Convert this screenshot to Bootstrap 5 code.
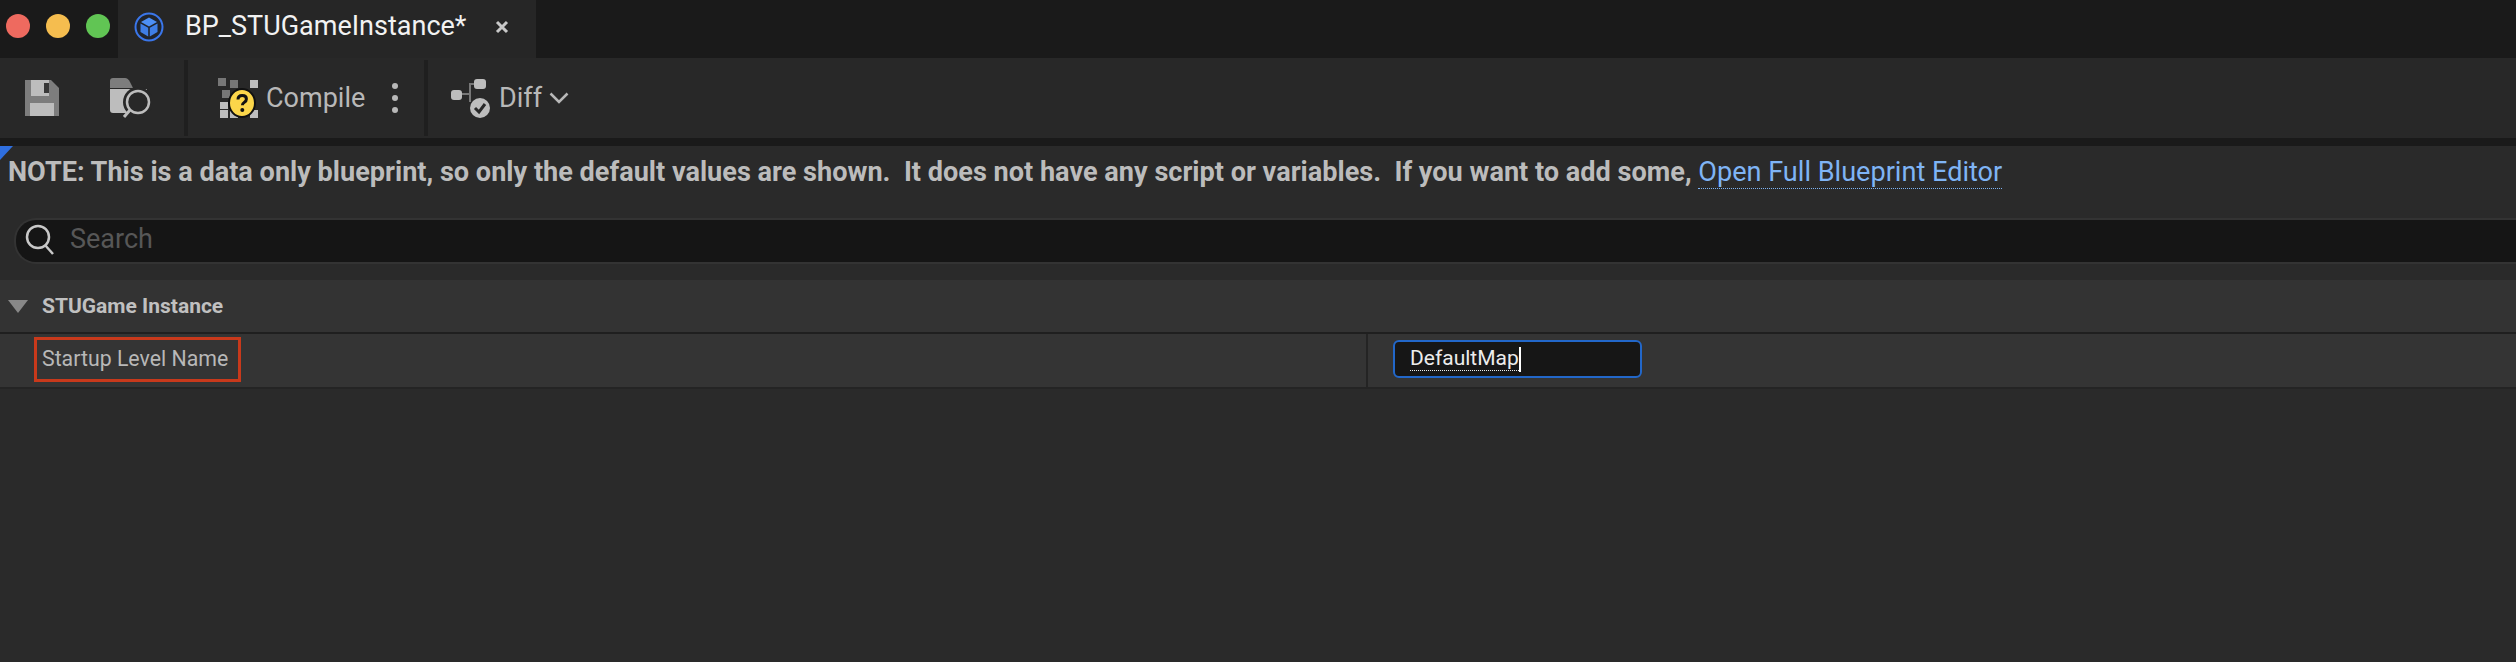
<!DOCTYPE html>
<html lang="en"><head><meta charset="utf-8"><title>BP_STUGameInstance</title>
<link href="https://cdn.jsdelivr.net/npm/bootstrap@5.3.0/dist/css/bootstrap.min.css" rel="stylesheet">
<style>
html,body{height:100%;margin:0;overflow:hidden;background:#2a2a2a;font-family:Roboto,"Liberation Sans",sans-serif;color:#c0c0c0}
.shell{height:662px;width:2516px}
.tabstrip{height:58px;background:#1a1a1a}
.lights{gap:16px;padding:0 0 6px 6px;width:118px;height:58px}
.light{width:24px;height:24px;border-radius:50%}
.tabitem{width:418px;height:58px;background:#262626;padding:0 0 5px 16px}
.tabtitle{font-size:27px;color:#f2f2f2;margin-left:21px;width:285px;white-space:nowrap;line-height:1}
.tabclose{margin-left:25px}
.toolbar{height:80px;background:#282828}
.sep{width:4px;height:76px;background:#1f1f1f;margin-top:2px}
.toollabel{font-size:27px;color:#b8b8b8;line-height:1;white-space:nowrap}
.gap-band{height:8px;background:#1a1a1a}
.panelbody{position:relative;background:#2a2a2a;flex:1}
.corner{position:absolute;left:0;top:0}
.notice{height:72px;padding:9px 0 0 8px;font-size:27.1px;font-weight:700;color:#bcbcbc;white-space:pre;line-height:34px}
.notice a{color:#7fb4f5;font-weight:400;text-decoration:none;border-bottom:1px dotted #7fb4f5}
.searchwrap{padding-left:14px;height:46px}
.searchbox{height:46px;background:#151515;border:2px solid #333;border-right:0;border-radius:22px 0 0 22px;padding:0 0 3px 9px}
.searchph{font-size:27px;color:#575757;margin-left:15px;line-height:1}
.catrow{margin-top:16px;height:54px;background:#333;border-bottom:2px solid #1f1f1f;padding-left:8px}
.catname{font-size:21px;font-weight:700;color:#c0c0c0;margin-left:14px;line-height:1}
.proprow{height:55px;background:#343434;border-bottom:2px solid #242424}
.propname{width:1366px;height:100%;padding-left:34px}
.redbox{width:207px;height:45px;border:3px solid #c8391b;padding-left:5px;font-size:21.3px;color:#b8b8b8;white-space:nowrap;margin-bottom:3px}
.propsep{width:2px;height:100%;background:#242424}
.propval{padding-left:25px}
.textbox{width:249px;height:38px;background:#161616;border:2px solid #2267c9;border-radius:6px;padding-left:15px;font-size:21px;color:#ececec;line-height:1;margin-bottom:3px}
.typed{border-bottom:1px dotted #eee;padding-bottom:1px;line-height:22px}
.caret-bar{display:inline-block;width:2px;height:25px;background:#fff}
</style></head>
<body>
<div class="shell d-flex flex-column">
  <div class="tabstrip d-flex">
    <div class="lights d-flex align-items-center">
      <span class="light" style="background:#ee6a5f"></span><span class="light" style="background:#f5bd4f"></span><span class="light" style="background:#61c554"></span>
    </div>
    <div class="tabitem d-flex align-items-center">
      <svg width="30" height="30" viewBox="0 0 30 30"><circle cx="15" cy="15" r="13.500" fill="#20242c" stroke="#3a76ea" stroke-width="2"/><path d="M15 5.500l8 4.500-8 4.500-8-4.500z" fill="#4d8ff5"/><path d="M6.500 11.500l7.700 4.300v8.700l-7.700-4.500zM23.500 11.500l-7.700 4.300v8.700l7.700-4.500z" fill="#3f7ee6"/></svg>
      <span class="tabtitle">BP_STUGameInstance*</span>
      <svg class="tabclose" width="14" height="14" viewBox="0 0 14 14"><path d="M2 2l10 10M12 2L2 12" stroke="#c8c8c8" stroke-width="3"/></svg>
    </div>
  </div>
  <div class="toolbar d-flex">
    <div class="d-flex align-items-center" style="width:184px;padding-left:25px;gap:51px">
      <svg width="34" height="36" viewBox="0 0 34 36"><path d="M0 0h26l8 8v28H0z" fill="#7d7d7d"/><path d="M6 0h18v16H6z" fill="#bdbdbd"/><path d="M19 3h5v10h-5z" fill="#383838"/><path d="M5 23h24v13H5z" fill="#bdbdbd"/></svg>
      <svg width="42" height="40" viewBox="0 0 42 40"><path d="M0 10V3q0-3 3-3h12q3 0 5 4l3 6z" fill="#7d7d7d"/><path d="M0 11h37v24H3q-3 0-3-3z" fill="#bdbdbd"/><circle cx="28" cy="24" r="15" fill="#282828"/><path d="M14 35h8v5h-8z" fill="#282828"/><circle cx="28" cy="24" r="11" fill="none" stroke="#bdbdbd" stroke-width="2.500"/><path d="M20 32l-6 7" stroke="#bdbdbd" stroke-width="3"/></svg>
    </div>
    <div class="sep"></div>
    <div class="d-flex align-items-center" style="width:236px;padding-left:30px">
      <svg width="40" height="40" viewBox="0 0 40 40"><g fill="#bdbdbd"><rect x="2" y="24" width="8" height="7"/><rect x="2" y="32" width="8" height="8"/><rect x="12" y="32" width="8" height="8"/><rect x="32" y="2" width="8" height="8"/><rect x="32" y="32" width="8" height="8"/></g><g fill="#777"><rect x="0" y="0" width="8" height="8"/><rect x="12" y="2" width="8" height="8"/><rect x="4" y="12" width="8" height="8"/></g><ellipse cx="24" cy="25" rx="13" ry="14" fill="#fbd64a" stroke="#111" stroke-width="2"/><path d="M20 21.500q0-4 4.200-4t4.200 3.600q0 2-2 3.200t-2 3" fill="none" stroke="#111" stroke-width="3"/><circle cx="24.300" cy="32" r="2" fill="#111"/></svg>
      <span class="toollabel" style="margin-left:8px">Compile</span>
      <svg class="ms-auto" style="margin-right:25px" width="8" height="32" viewBox="0 0 8 32"><g fill="#b8b8b8"><circle cx="4" cy="4" r="3"/><circle cx="4" cy="16" r="3"/><circle cx="4" cy="28" r="3"/></g></svg>
    </div>
    <div class="sep"></div>
    <div class="d-flex align-items-center" style="padding-left:23px">
      <svg width="42" height="40" viewBox="0 0 42 40"><path d="M10 16h9V6h6" fill="none" stroke="#777" stroke-width="2"/><path d="M19 16v8" stroke="#777" stroke-width="2"/><rect x="0" y="12" width="11" height="10" rx="3" fill="#bdbdbd"/><rect x="23" y="1" width="12" height="10" rx="3" fill="#bdbdbd"/><circle cx="29" cy="30" r="10" fill="#bdbdbd"/><path d="M24 30l4 4 6-8" fill="none" stroke="#282828" stroke-width="3"/></svg>
      <span class="toollabel" style="margin-left:6px">Diff</span>
      <svg style="margin-left:7px" width="20" height="12" viewBox="0 0 20 12"><path d="M1.500 1.500L10 10l8.500-8.500" fill="none" stroke="#b8b8b8" stroke-width="2.500"/></svg>
    </div>
  </div>
  <div class="gap-band"></div>
  <div class="panelbody">
    <svg class="corner" width="13" height="14" viewBox="0 0 13 14"><path d="M0 0h13L0 14z" fill="#2f6fe0"/></svg>
    <div class="notice">NOTE: This is a data only blueprint, so only the default values are shown.  It does not have any script or variables.  If you want to add some, <a href="#">Open Full Blueprint Editor</a></div>
    <div class="searchwrap">
      <div class="searchbox d-flex align-items-center">
        <svg width="30" height="32" viewBox="0 0 30 32"><circle cx="13" cy="13" r="11" fill="none" stroke="#c8c8c8" stroke-width="2.500"/><path d="M20 21l8 9" stroke="#c8c8c8" stroke-width="2.500"/></svg>
        <span class="searchph">Search</span>
      </div>
    </div>
    <div class="catrow d-flex align-items-center">
      <svg width="20" height="13" viewBox="0 0 20 13"><path d="M0 0h20L10 13z" fill="#888"/></svg>
      <span class="catname">STUGame Instance</span>
    </div>
    <div class="proprow d-flex">
      <div class="propname d-flex align-items-center">
        <div class="redbox d-flex align-items-center">Startup Level Name</div>
      </div>
      <div class="propsep"></div>
      <div class="propval d-flex align-items-center">
        <div class="textbox d-flex align-items-center"><span class="typed">DefaultMap</span><span class="caret-bar"></span></div>
      </div>
    </div>
  </div>
</div>
<script src="https://cdn.jsdelivr.net/npm/bootstrap@5.3.0/dist/js/bootstrap.bundle.min.js"></script>
</body></html>
